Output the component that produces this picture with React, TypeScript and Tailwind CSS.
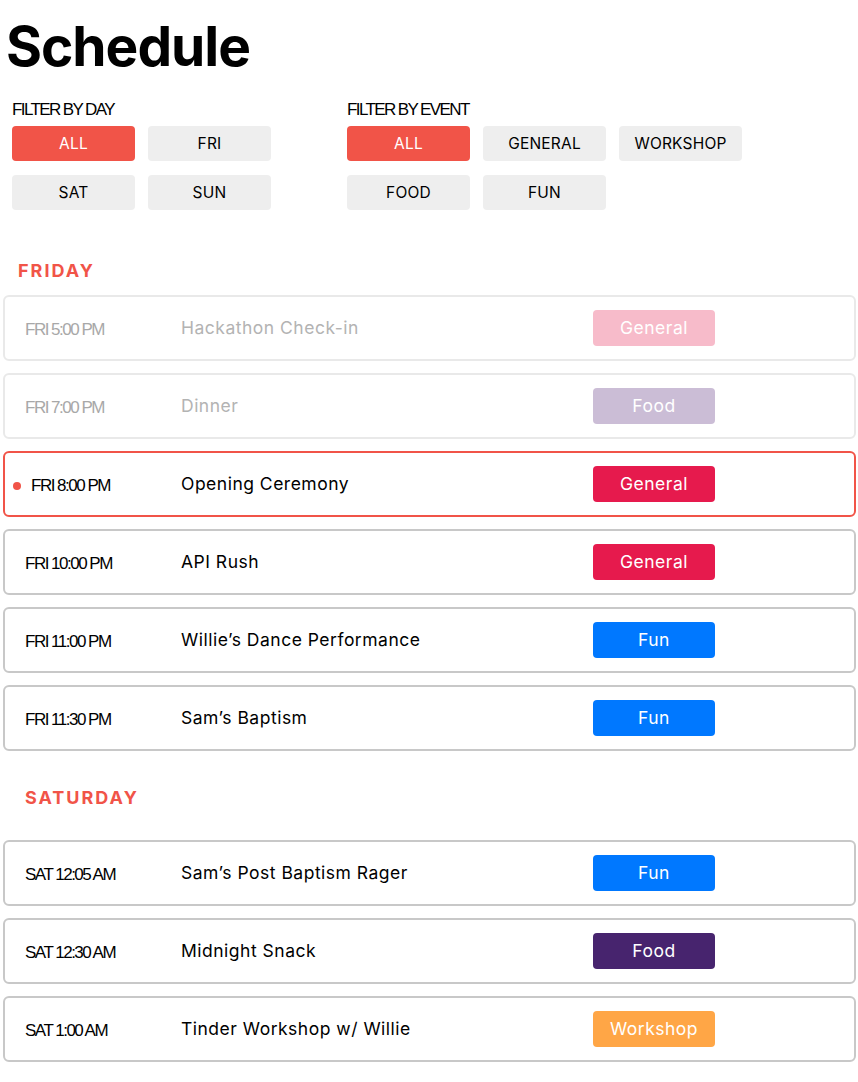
import { useState } from 'react';

type Kind = 'General' | 'Food' | 'Fun' | 'Workshop';

const badgeColors: Record<Kind, string> = {
  General: 'bg-[#e61a4d]',
  Food: 'bg-[#47246e]',
  Fun: 'bg-[#0078ff]',
  Workshop: 'bg-[#ffa646]',
};

const fadedColors: Record<Kind, string> = {
  General: 'bg-[#f7bbca]',
  Food: 'bg-[#cbbdd6]',
  Fun: 'bg-[#b3d5ff]',
  Workshop: 'bg-[#ffe0be]',
};

type Item = { time: string; title: string; kind: Kind; status: 'past' | 'now' | 'next' };

const friday: Item[] = [
  { time: 'FRI 5:00 PM', title: 'Hackathon Check-in', kind: 'General', status: 'past' },
  { time: 'FRI 7:00 PM', title: 'Dinner', kind: 'Food', status: 'past' },
  { time: 'FRI 8:00 PM', title: 'Opening Ceremony', kind: 'General', status: 'now' },
  { time: 'FRI 10:00 PM', title: 'API Rush', kind: 'General', status: 'next' },
  { time: 'FRI 11:00 PM', title: 'Willie’s Dance Performance', kind: 'Fun', status: 'next' },
  { time: 'FRI 11:30 PM', title: 'Sam’s Baptism', kind: 'Fun', status: 'next' },
];

const saturday: Item[] = [
  { time: 'SAT 12:05 AM', title: 'Sam’s Post Baptism Rager', kind: 'Fun', status: 'next' },
  { time: 'SAT 12:30 AM', title: 'Midnight Snack', kind: 'Food', status: 'next' },
  { time: 'SAT 1:00 AM', title: 'Tinder Workshop w/ Willie', kind: 'Workshop', status: 'next' },
];

function FilterButton({ label, active, onClick }: { label: string; active: boolean; onClick: () => void }) {
  return (
    <button
      onClick={onClick}
      className={`h-[35px] w-[123px] rounded-[4px] text-[15.5px] tracking-[0.2px] ${
        active ? 'bg-[#f15448] text-white' : 'bg-[#eeeeee] text-black'
      }`}
    >
      {label}
    </button>
  );
}

function Row({ item }: { item: Item }) {
  const past = item.status === 'past';
  const now = item.status === 'now';
  const border = past ? 'border-[#e9e9e9]' : now ? 'border-[#f15448]' : 'border-[#c8c8c8]';
  return (
    <div className={`mb-[12px] flex h-[66px] items-center rounded-[6px] border-2 bg-white ${border}`}>
      <div className="flex w-[176px] shrink-0 items-center pl-[20px] pt-[4px]">
        {now && <span className="-ml-[12px] mr-[10px] h-[8px] w-[8px] rounded-full bg-[#f15448]" />}
        <span
          className={`font-['Liberation_Sans',sans-serif] text-[17px] tracking-[-1.5px] ${
            past ? 'text-[#a8a8a8]' : 'text-black'
          }`}
        >
          {item.time}
        </span>
      </div>
      <div
        className={`flex-1 pt-[1px] text-[17.5px] tracking-[0.5px] ${past ? 'text-[#b3b3b3]' : 'text-black'}`}
      >
        {item.title}
      </div>
      <div
        className={`mr-[139px] flex h-[36px] w-[122px] items-center justify-center rounded-[4px] text-[17.5px] tracking-[0.5px] text-white ${
          past ? fadedColors[item.kind] : badgeColors[item.kind]
        }`}
      >
        {item.kind}
      </div>
    </div>
  );
}

export default function App() {
  const [day, setDay] = useState('ALL');
  const [kind, setKind] = useState('ALL');

  return (
    <div className="min-h-screen bg-white pb-6 font-['Inter',sans-serif] text-black">
      <h1 className="pl-[6px] pt-[14px] text-[55px] leading-[64px] font-bold tracking-[-1px]">Schedule</h1>

      <div className="mt-[22px] flex pl-[12px]">
        <div className="w-[335px]">
          <div className="mb-[6px] font-['Liberation_Sans',sans-serif] text-[17px] leading-[20px] tracking-[-1.6px]">
            FILTER BY DAY
          </div>
          <div className="grid w-[259px] grid-cols-2 gap-x-[13px] gap-y-[14px]">
            {['ALL', 'FRI', 'SAT', 'SUN'].map((d) => (
              <FilterButton key={d} label={d} active={day === d} onClick={() => setDay(d)} />
            ))}
          </div>
        </div>
        <div>
          <div className="mb-[6px] font-['Liberation_Sans',sans-serif] text-[17px] leading-[20px] tracking-[-1.6px]">
            FILTER BY EVENT
          </div>
          <div className="grid w-[395px] grid-cols-3 gap-x-[13px] gap-y-[14px]">
            {['ALL', 'GENERAL', 'WORKSHOP', 'FOOD', 'FUN'].map((k) => (
              <FilterButton key={k} label={k} active={kind === k} onClick={() => setKind(k)} />
            ))}
          </div>
        </div>
      </div>

      <h2 className="mt-[50px] mb-[13px] pl-[18px] text-[18px] leading-[22px] font-bold tracking-[2px] text-[#f15448]">
        FRIDAY
      </h2>
      <div className="pl-[3px] pr-[2px]">
        {friday.map((item) => (
          <Row key={item.time} item={item} />
        ))}
      </div>

      <h2 className="mt-[36px] mb-[31px] pl-[25px] text-[18px] leading-[22px] font-bold tracking-[2px] text-[#f15448]">
        SATURDAY
      </h2>
      <div className="pl-[3px] pr-[2px]">
        {saturday.map((item) => (
          <Row key={item.time} item={item} />
        ))}
      </div>
    </div>
  );
}
